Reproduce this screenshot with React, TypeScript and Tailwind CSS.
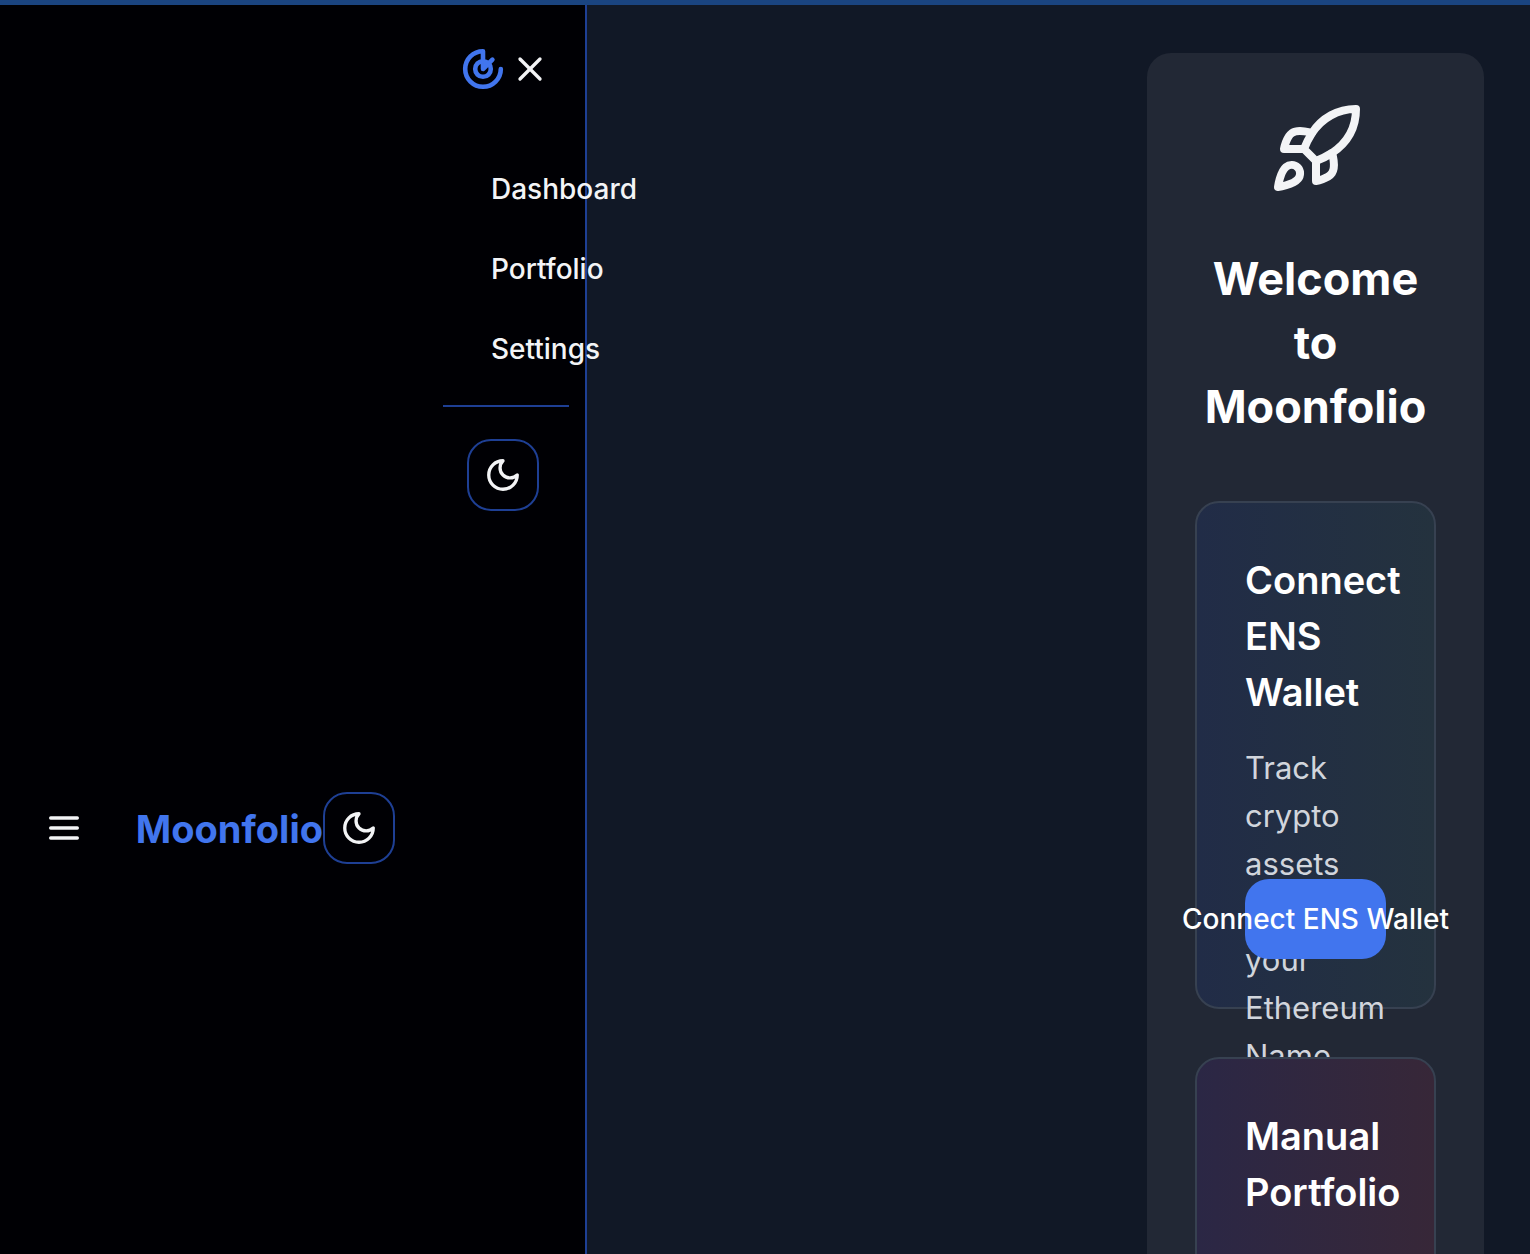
import React from "react";
import { X } from "lucide-react";

function MoonIcon() {
  return (
    <svg viewBox="0 0 24 24" className="size-[38px] shrink-0" fill="none" stroke="currentColor" strokeWidth="2.1" strokeLinecap="round" strokeLinejoin="round" aria-hidden="true">
      <path d="M12 3a6 6 0 0 0 9 9 9 9 0 1 1-9-9Z" />
    </svg>
  );
}

function MenuIcon() {
  return (
    <svg viewBox="0 0 24 24" className="size-10 shrink-0" fill="none" stroke="currentColor" strokeWidth="2" strokeLinecap="round" aria-hidden="true">
      <path d="M4 6h16M4 12h16M4 18h16" />
    </svg>
  );
}

function RadarLogo() {
  return (
    <svg viewBox="0 0 24 24" className="size-12 shrink-0 text-[#4175ee]" fill="none" stroke="currentColor" strokeWidth="2.3" strokeLinecap="round" strokeLinejoin="round" aria-hidden="true">
      <path d="M20.9 12a8.9 8.9 0 1 1-8.9-8.9v8.9l4.7-4.7" />
      <circle cx="12" cy="12" r="3.9" />
    </svg>
  );
}

function RocketIcon() {
  return (
    <svg viewBox="0 0 24 24" className="size-24 text-gray-100" fill="none" stroke="currentColor" strokeWidth="2" strokeLinecap="round" strokeLinejoin="round" aria-hidden="true">
      <path d="M4.5 16.5c-1.5 1.26-2 5-2 5s3.74-.5 5-2c.71-.84.7-2.13-.09-2.91a2.18 2.18 0 0 0-2.91-.09z" />
      <path d="m12 15-3-3a22 22 0 0 1 2-3.95A12.88 12.88 0 0 1 22 2c0 2.72-.78 7.5-6 11a22.35 22.35 0 0 1-4 2z" />
      <path d="M9 12H4s.55-3.03 2-4c1.62-1.08 5 0 5 0" />
      <path d="M12 15v5s3.03-.55 4-2c1.08-1.62 0-5 0-5" />
    </svg>
  );
}

function ThemeToggle() {
  return (
    <button type="button" aria-label="Toggle theme" className="flex size-18 shrink-0 items-center justify-center rounded-3xl border-2 border-[#1e3f94] text-gray-100">
      <MoonIcon />
    </button>
  );
}

export default function App() {
  return (
    <div className="flex h-screen flex-col overflow-hidden bg-[#000004] font-['Inter',sans-serif] text-gray-100">
      <div className="h-[5px] shrink-0 bg-[#1a4480]" />
      <div className="flex min-h-0 flex-1">
        <header className="flex shrink-0 items-center self-start px-8 pt-[787px]">
          <button type="button" aria-label="Open menu" className="flex size-16 items-center justify-center">
            <MenuIcon />
          </button>
          <div className="flex w-[299px] items-center justify-end">
            <span className="pt-0.5 text-[38px] leading-[56px] font-bold text-[#4175ee]">Moonfolio</span>
            <ThemeToggle />
          </div>
        </header>

        <aside className="relative z-10 w-40 shrink-0 border-r-2 border-[#1e3f94] px-4">
          <div className="flex h-32 items-center gap-[3px] pl-4">
            <RadarLogo />
            <button type="button" aria-label="Close menu">
              <X className="size-10" />
            </button>
          </div>
          <nav className="mt-4 flex flex-col">
            <a href="#dashboard" className="flex h-20 items-center pl-12 text-[28px] leading-10 font-medium">Dashboard</a>
            <a href="#portfolio" className="flex h-20 items-center pl-12 text-[28px] leading-10 font-medium">Portfolio</a>
            <a href="#settings" className="flex h-20 items-center pl-12 text-[28px] leading-10 font-medium">Settings</a>
          </nav>
          <div className="mt-4 border-t-2 border-[#1e3f94] pt-8 pl-6">
            <ThemeToggle />
          </div>
        </aside>

        <main className="flex flex-1 items-start justify-end bg-[#111826] pt-12 pr-[46px]">
          <section className="flex w-[337px] flex-col rounded-3xl bg-[#222835] p-12">
            <div className="flex justify-center">
              <RocketIcon />
            </div>
            <h1 className="mt-[50px] text-center text-[45px] leading-[64px] font-bold text-white">Welcome to Moonfolio</h1>
            <div className="mt-[62px] flex flex-col gap-12">
              <article className="flex h-[508px] flex-col rounded-3xl border-2 border-[#374151] bg-linear-to-r from-[#212c47] to-[#24323e] px-12 pt-[49px] pb-12">
                <h2 className="text-[38px] leading-[56px] font-semibold text-white">Connect ENS Wallet</h2>
                <p className="mt-6 min-h-0 flex-1 text-[31px] leading-[48px] text-gray-300">
                  Track crypto assets using your Ethereum Name
                </p>
                <button type="button" className="relative flex h-20 shrink-0 items-center justify-center rounded-3xl bg-[#4175ee] text-[28px] leading-10 font-medium whitespace-nowrap text-white">
                  Connect ENS Wallet
                </button>
              </article>
              <article className="relative flex h-[508px] flex-col rounded-3xl border-2 border-[#374151] bg-linear-to-r from-[#2b2745] to-[#372738] px-12 pt-[49px] pb-12">
                <h2 className="text-[38px] leading-[56px] font-semibold text-white">Manual Portfolio</h2>
              </article>
            </div>
          </section>
        </main>
      </div>
    </div>
  );
}
